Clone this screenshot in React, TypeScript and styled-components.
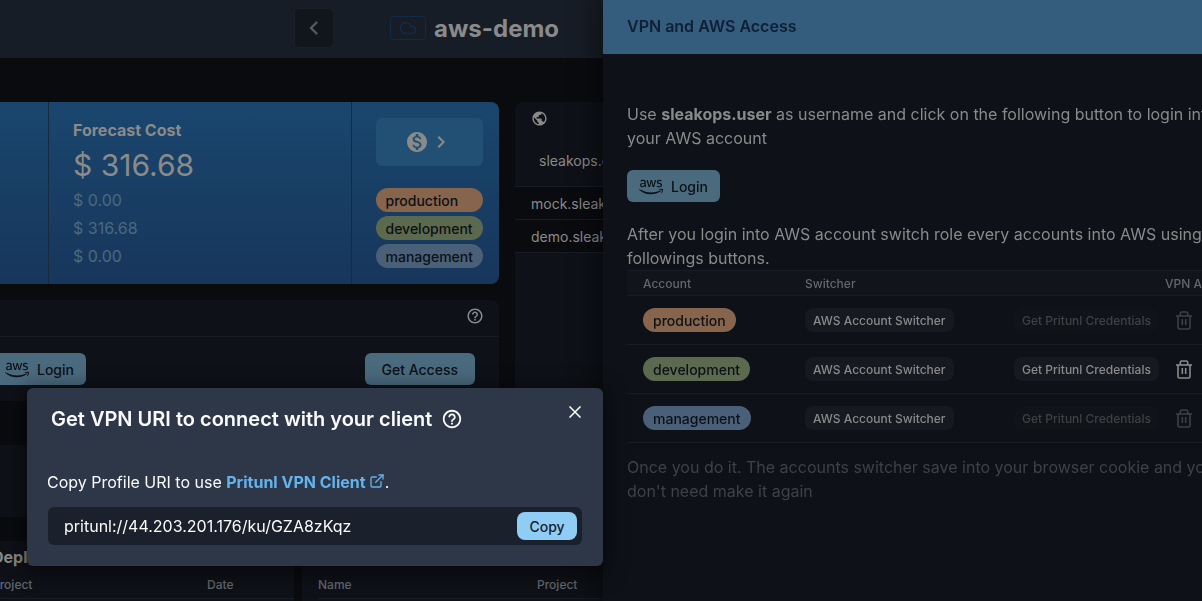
import React from "react";
import styled, { createGlobalStyle } from "styled-components";
import { FaAws } from "react-icons/fa";
import {
  MdChevronLeft,
  MdChevronRight,
  MdHelpOutline,
  MdMonetizationOn,
  MdPublic,
} from "react-icons/md";
import { Cloud, ExternalLink } from "lucide-react";

const color = {
  page: "#0a0b0f",
  bar: "#171d26",
  card: "#0e1117",
  line: "#171c25",
  text: "#8a8a8a",
  dim: "#63676e",
  faint: "#3f4144",
  action: "#4a6a7e",
  ink: "#0d1016",
};

const GlobalStyle = createGlobalStyle`
  *, *::before, *::after { box-sizing: border-box; }
  html, body { margin: 0; height: 100%; }
  body {
    background: ${color.page};
    color: ${color.text};
    font-family: Inter, "Liberation Sans", sans-serif;
    font-size: 16px;
    line-height: 24px;
    overflow: hidden;
  }
  h1, h2, h3, p, dl, dd, ul { margin: 0; padding: 0; }
  ul { list-style: none; }
  button, input { font-family: inherit; margin: 0; }
  svg { display: block; flex-shrink: 0; }
`;

const Page = styled.div`
  min-height: 100vh;
  overflow: hidden;
`;

const TopBar = styled.header`
  display: flex;
  align-items: center;
  height: 58px;
  padding: 0 0 2px 294px;
  background: ${color.bar};
`;

const BackButton = styled.button`
  display: flex;
  align-items: center;
  justify-content: center;
  width: 40px;
  height: 40px;
  margin-right: 56px;
  padding: 0;
  border: 1px solid #1a1f28;
  border-radius: 6px;
  background: #11151c;
  color: #55585e;
`;

const CloudBadge = styled.span`
  display: flex;
  align-items: center;
  justify-content: center;
  width: 36px;
  height: 24px;
  margin-right: 8px;
  border: 1px solid #122b49;
  border-radius: 4px;
  color: #122f52;
`;

const PageTitle = styled.h1`
  padding-top: 2px;
  font-size: 24px;
  line-height: 32px;
  font-weight: 700;
`;

const Content = styled.main`
  display: flex;
  flex-direction: column;
  gap: 24px;
  margin-left: -32px;
  padding-top: 44px;
`;

const Upper = styled.div`
  display: grid;
  grid-template-columns: calc(50% - 86px) 1fr;
  gap: 16px;
`;

const Lower = styled.div`
  display: grid;
  grid-template-columns: 326px 1fr;
  gap: 8px;
`;

const Column = styled.div`
  display: flex;
  flex-direction: column;
`;

const Card = styled.section`
  overflow: hidden;
  border-radius: 8px;
  background: ${color.card};
`;

const CostCard = styled.section`
  display: flex;
  margin-bottom: 16px;
  border-radius: 8px;
  background: linear-gradient(#1a466e, #17365b);
`;

const CostSlice = styled.div`
  width: 81px;
  border-right: 1px solid #172a41;
`;

const Forecast = styled.div`
  flex: 1;
  padding: 16px 24px;
  border-right: 1px solid #172a41;
`;

const ForecastTitle = styled.h2`
  font-size: 16px;
  line-height: 24px;
  font-weight: 700;
`;

const ForecastTotal = styled.p`
  font-size: 30px;
  line-height: 46px;
`;

const StackedList = styled.ul`
  display: flex;
  flex-direction: column;
  gap: 4px;
  color: #4a6a80;
`;

const CostAside = styled.div`
  display: flex;
  flex-direction: column;
  justify-content: space-between;
  padding: 16px 16px 16px 24px;
`;

const BillingButton = styled.button`
  display: flex;
  align-items: center;
  justify-content: center;
  height: 48px;
  padding: 0;
  border: 0;
  border-radius: 6px;
  background: #215074;
  color: ${color.text};
`;

const tagTones = {
  production: "#86654c",
  development: "#5b6a4e",
  management: "#4a6078",
};

const Tag = styled.span<{ $tone: keyof typeof tagTones; $block?: boolean }>`
  display: ${(p) => (p.$block ? "block" : "inline-block")};
  height: 24px;
  padding: 1px 10px 0;
  border-radius: 12px;
  background: ${(p) => tagTones[p.$tone]};
  color: ${color.ink};
  font-size: 14px;
  line-height: 24px;
  font-weight: 500;
  vertical-align: top;
`;

const CardHead = styled.div`
  display: flex;
  align-items: center;
  justify-content: flex-end;
  height: 37px;
  padding: 0 15px 4px;
  border-bottom: 1px solid ${color.line};
`;

const AccessBody = styled.div`
  display: flex;
  justify-content: space-between;
  padding: 16px 24px 16px 25px;
`;

const ActionButton = styled.button`
  display: flex;
  align-items: center;
  gap: 8px;
  height: 32px;
  padding: 2px 12px 0;
  border: 0;
  border-radius: 6px;
  background: ${color.action};
  color: ${color.ink};
  font-size: 14px;
  line-height: 20px;
  font-weight: 500;
`;

const WideAction = styled(ActionButton)`
  padding: 2px 17px 0;
`;

const EmptyCard = styled(Card)`
  height: 72px;
  margin-top: 44px;
`;

const DomainHead = styled.div`
  display: flex;
  flex-direction: column;
  gap: 24px;
  height: 85px;
  padding: 8px 16px 0;
  border-bottom: 1px solid ${color.line};
`;

const DomainName = styled.p`
  padding-left: 8px;
  font-size: 14px;
  line-height: 20px;
`;

const DomainRow = styled.li`
  height: 33px;
  padding: 0 16px;
  border-bottom: 1px solid ${color.line};
  background: ${color.page};
  font-size: 14px;
  line-height: 34px;
`;

const ListCard = styled(Card)<{ $inset: number }>`
  height: 72px;
  padding-left: ${(p) => p.$inset}px;
`;

const ListTitle = styled.h3`
  height: 32px;
  font-size: 16px;
  line-height: 32px;
  font-weight: 700;
`;

const ListTable = styled.table<{ $lead: number }>`
  width: 100%;
  border-collapse: collapse;
  table-layout: fixed;
  th {
    height: 25px;
    padding: 0;
    border-bottom: 1px solid ${color.line};
    color: ${color.dim};
    font-size: 12px;
    line-height: 24px;
    font-weight: 500;
    text-align: left;
  }
  th:first-child { width: ${(p) => p.$lead}px; }
`;

const Drawer = styled.aside`
  position: fixed;
  top: 0;
  right: 0;
  bottom: 0;
  width: calc(50% - 2px);
  overflow: hidden;
  background: ${color.card};
  box-shadow: 0 0 24px 8px rgba(0, 0, 0, 0.4);
`;

const DrawerHead = styled.header`
  padding: 14px 24px 16px;
  background: #345d7d;
  color: #0f1f36;
`;

const DrawerTitle = styled.h2`
  font-size: 16px;
  line-height: 24px;
  font-weight: 600;
`;

const DrawerBody = styled.div`
  width: 660px;
  padding: 48px 24px;
`;

const LoginSlot = styled.div`
  display: flex;
  padding: 20px 0;
`;

const RoleTable = styled.table`
  width: 100%;
  border-collapse: collapse;
  table-layout: fixed;
  margin-bottom: 12px;
  th {
    height: 25px;
    padding: 1px 0 0 16px;
    border-top: 1px solid ${color.line};
    border-bottom: 1px solid ${color.line};
    background: #11141b;
    color: ${color.dim};
    font-size: 12px;
    line-height: 23px;
    font-weight: 500;
    text-align: left;
  }
  td {
    height: 49px;
    padding: 0 0 0 16px;
    border-bottom: 1px solid ${color.line};
    line-height: 24px;
  }
  th:nth-child(1) { width: 162px; }
  th:nth-child(2) { width: 209px; }
  th:nth-child(3) { width: 167px; }
  th:nth-child(4) { padding-left: 0; }
  td:nth-child(4) { padding-left: 7px; }
`;

const ChipButton = styled.button`
  height: 24px;
  padding: 1px 8px 0;
  border: 0;
  border-radius: 8px;
  background: #161920;
  color: ${color.text};
  font-size: 12px;
  line-height: 24px;
  font-weight: 500;
  white-space: nowrap;
  vertical-align: top;
  &:disabled { background: #101318; color: ${color.faint}; }
`;

const IconButton = styled.button`
  display: flex;
  align-items: center;
  justify-content: center;
  width: 24px;
  height: 24px;
  padding: 0;
  border: 0;
  background: none;
  color: ${color.text};
  &:disabled { color: ${color.faint}; }
`;

const FaintText = styled.p`
  color: ${color.faint};
`;

const Modal = styled.div`
  position: fixed;
  right: calc(50% - 2px);
  bottom: 35px;
  width: 576px;
  padding: 19px 21px 21px;
  border-radius: 6px;
  background: #2e3748;
  color: #fafafa;
  box-shadow: 0 4px 20px 4px rgba(0, 0, 0, 0.5);
`;

const ModalHead = styled.header`
  display: flex;
  align-items: center;
  gap: 9px;
  height: 24px;
  margin-bottom: 39px;
  padding-left: 3px;
`;

const ModalTitle = styled.h2`
  font-size: 20px;
  line-height: 24px;
  font-weight: 600;
`;

const CloseButton = styled(IconButton)`
  align-self: flex-start;
  margin: -7px -5px 0 auto;
  color: #ffffff;
`;

const ModalText = styled.label`
  display: flex;
  align-items: center;
  margin: 0 -1px 13px;
  white-space: pre;
`;

const ClientLink = styled.a`
  display: flex;
  align-items: center;
  gap: 3px;
  color: #63b3ed;
  font-weight: 700;
  text-decoration: none;
  svg { margin-bottom: 2px; }
`;

const UriField = styled.div`
  display: flex;
  align-items: center;
  height: 38px;
  padding: 0 5px 0 0;
  border-radius: 6px;
  background: #1a202c;
`;

const UriInput = styled.input`
  flex: 1;
  min-width: 0;
  padding: 0 16px;
  border: 0;
  outline: 0;
  background: none;
  color: #fafafa;
  font-size: 16px;
  line-height: 24px;
`;

const CopyButton = styled.button`
  min-width: 60px;
  height: 28px;
  padding: 1px 12px 0;
  border: 0;
  border-radius: 8px;
  background: #90cdf4;
  color: #1a202c;
  font-size: 14px;
  line-height: 24px;
  font-weight: 500;
`;

const TrashIcon = () => (
  <svg width="16" height="19" viewBox="0 0 16 19" fill="none" stroke="currentColor" strokeWidth="1.6" aria-hidden="true">
    <path d="M0 5h16" />
    <path d="M4.3 5V2.6Q4.3 1 5.9 1h4.2q1.6 0 1.6 1.6V5" />
    <path d="M2 5v11.4q0 1.6 1.6 1.6h8.8q1.6 0 1.6-1.6V5" />
    <path d="M6.3 8v6M9.7 8v6" />
  </svg>
);

const CloseIcon = () => (
  <svg width="12" height="12" viewBox="0 0 12 12" fill="none" stroke="currentColor" strokeWidth="1.5" aria-hidden="true">
    <path d="M0.5 0.5l11 11M11.5 0.5l-11 11" />
  </svg>
);

type Account = "production" | "development" | "management";

const accounts: { name: Account; amount: string; active: boolean }[] = [
  { name: "production", amount: "$ 0.00", active: false },
  { name: "development", amount: "$ 316.68", active: true },
  { name: "management", amount: "$ 0.00", active: false },
];

const CostSummary = () => (
  <CostCard>
    <CostSlice />
    <Forecast>
      <ForecastTitle>Forecast Cost</ForecastTitle>
      <ForecastTotal>$ 316.68</ForecastTotal>
      <StackedList>
        {accounts.map((a) => (
          <li key={a.name}>{a.amount}</li>
        ))}
      </StackedList>
    </Forecast>
    <CostAside>
      <BillingButton aria-label="Open billing">
        <MdMonetizationOn size={24} />
        <MdChevronRight size={24} />
      </BillingButton>
      <StackedList>
        {accounts.map((a) => (
          <li key={a.name}>
            <Tag $tone={a.name} $block>{a.name}</Tag>
          </li>
        ))}
      </StackedList>
    </CostAside>
  </CostCard>
);

const LoginButton = () => (
  <ActionButton>
    <FaAws size={24} />
    Login
  </ActionButton>
);

const AccessDrawer = () => (
  <Drawer>
    <DrawerHead>
      <DrawerTitle>VPN and AWS Access</DrawerTitle>
    </DrawerHead>
    <DrawerBody>
      <p>
        Use <b>sleakops.user</b> as username and click on the following button to login into
        your AWS account
      </p>
      <LoginSlot>
        <LoginButton />
      </LoginSlot>
      <p>
        After you login into AWS account switch role every accounts into AWS using the
        followings buttons.
      </p>
      <RoleTable>
        <thead>
          <tr>
            <th>Account</th>
            <th>Switcher</th>
            <th aria-label="Credentials" />
            <th>VPN Access</th>
          </tr>
        </thead>
        <tbody>
          {accounts.map((a) => (
            <tr key={a.name}>
              <td><Tag $tone={a.name}>{a.name}</Tag></td>
              <td><ChipButton>AWS Account Switcher</ChipButton></td>
              <td><ChipButton disabled={!a.active}>Get Pritunl Credentials</ChipButton></td>
              <td>
                <IconButton disabled={!a.active} aria-label={`Delete ${a.name} credentials`}>
                  <TrashIcon />
                </IconButton>
              </td>
            </tr>
          ))}
        </tbody>
      </RoleTable>
      <FaintText>
        Once you do it. The accounts switcher save into your browser cookie and you
        don't need make it again
      </FaintText>
    </DrawerBody>
  </Drawer>
);

const VpnModal = () => (
  <Modal role="dialog" aria-labelledby="vpn-title">
    <ModalHead>
      <ModalTitle id="vpn-title">Get VPN URI to connect with your client</ModalTitle>
      <MdHelpOutline size={22} />
      <CloseButton aria-label="Close"><CloseIcon /></CloseButton>
    </ModalHead>
    <ModalText htmlFor="profile-uri">
      Copy Profile URI to use{" "}
      <ClientLink href="#client">
        Pritunl VPN Client
        <ExternalLink size={16} strokeWidth={2} />
      </ClientLink>
      .
    </ModalText>
    <UriField>
      <UriInput id="profile-uri" readOnly value="pritunl://44.203.201.176/ku/GZA8zKqz" />
      <CopyButton>Copy</CopyButton>
    </UriField>
  </Modal>
);

export default function App() {
  return (
    <>
      <GlobalStyle />
      <Page>
        <TopBar>
          <BackButton aria-label="Back"><MdChevronLeft size={28} /></BackButton>
          <CloudBadge><Cloud size={18} strokeWidth={1.5} /></CloudBadge>
          <PageTitle>aws-demo</PageTitle>
        </TopBar>
        <Content>
          <Upper>
            <Column>
              <CostSummary />
              <Card>
                <CardHead><MdHelpOutline size={18} /></CardHead>
                <AccessBody>
                  <LoginButton />
                  <WideAction>Get Access</WideAction>
                </AccessBody>
              </Card>
              <EmptyCard />
            </Column>
            <Card>
              <DomainHead>
                <MdPublic size={17} />
                <DomainName>sleakops.com</DomainName>
              </DomainHead>
              <ul>
                <DomainRow>mock.sleakops.com</DomainRow>
                <DomainRow>demo.sleakops.com</DomainRow>
              </ul>
            </Card>
          </Upper>
          <Lower>
            <ListCard $inset={24}>
              <ListTitle>Deployments</ListTitle>
              <ListTable $lead={215}>
                <thead><tr><th>Project</th><th>Date</th></tr></thead>
              </ListTable>
            </ListCard>
            <ListCard $inset={16}>
              <ListTitle />
              <ListTable $lead={219}>
                <thead><tr><th>Name</th><th>Project</th></tr></thead>
              </ListTable>
            </ListCard>
          </Lower>
        </Content>
      </Page>
      <AccessDrawer />
      <VpnModal />
    </>
  );
}
